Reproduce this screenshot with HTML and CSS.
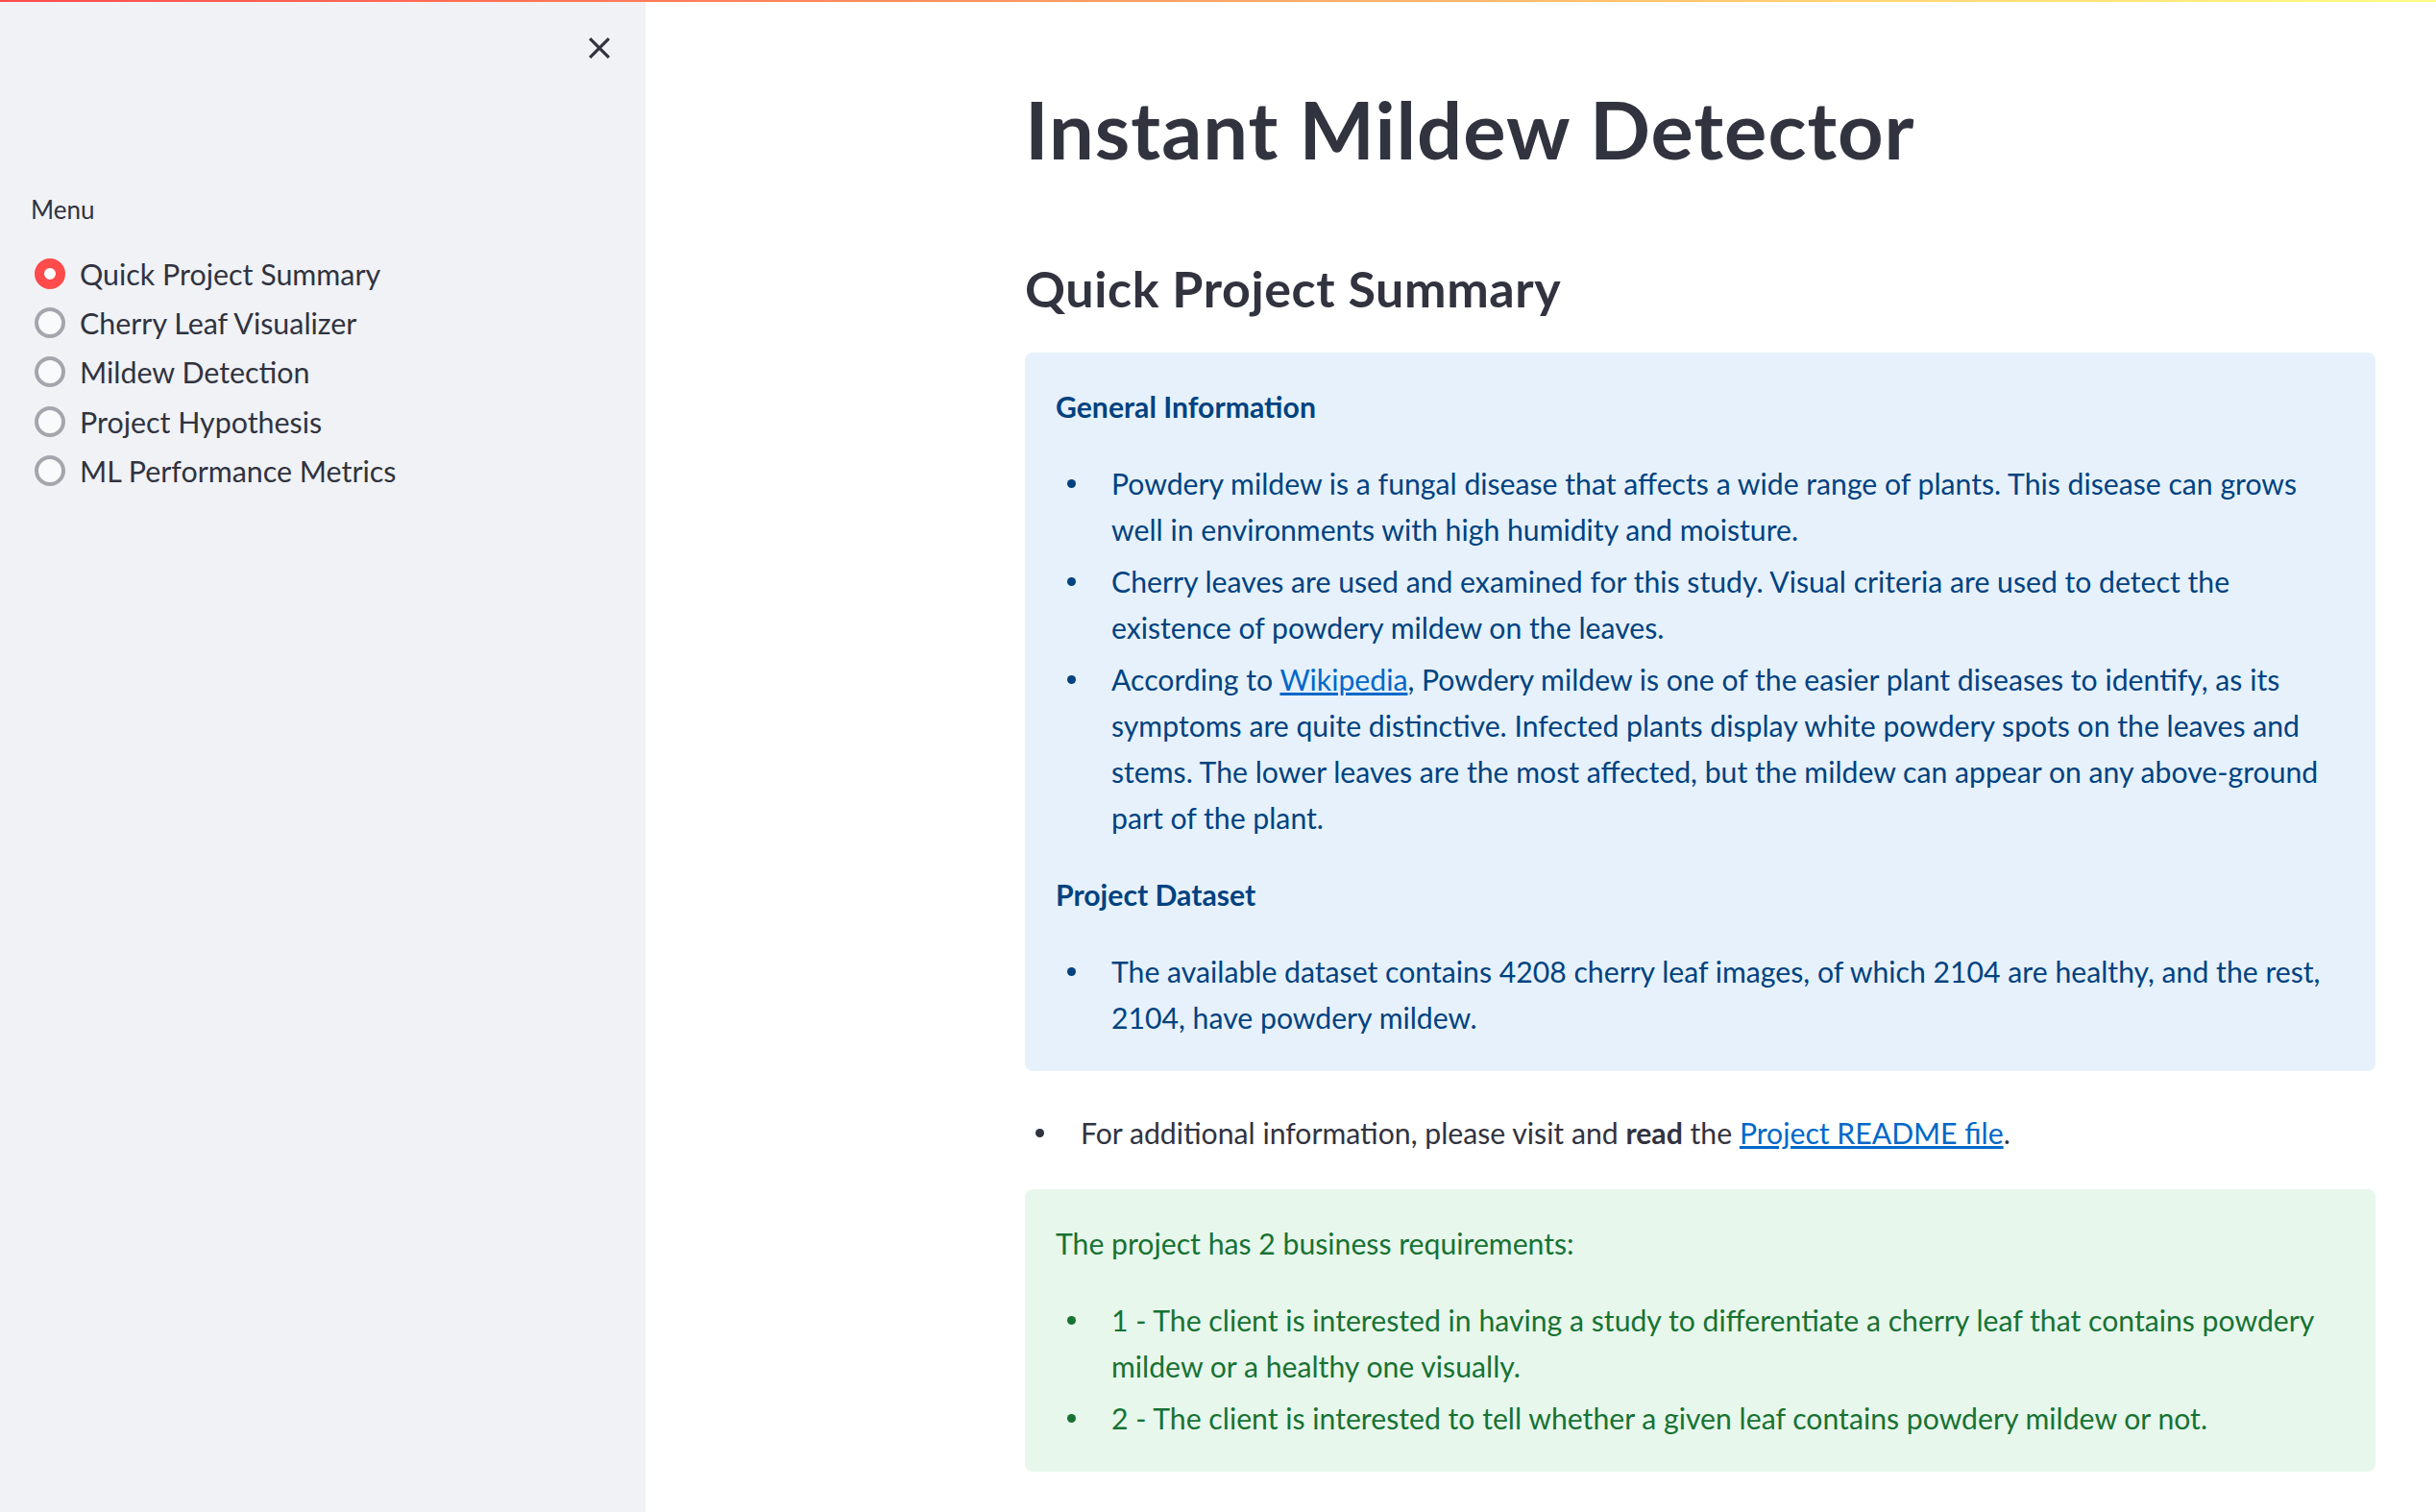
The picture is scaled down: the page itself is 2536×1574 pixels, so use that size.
FILE: index.html
```html
<!DOCTYPE html>
<html lang="en">
<head>
<meta charset="utf-8">
<title>Instant Mildew Detector</title>
<link rel="stylesheet" href="styles.css">
</head>
<body>
<div class="topbar"></div>
<div class="app">
  <aside class="sidebar">
    <div class="sb-head">
      <button class="close" aria-label="Close sidebar">
        <svg viewBox="5 5 14 14" width="22" height="22"><path d="M19 6.41L17.59 5 12 10.59 6.41 5 5 6.41 10.59 12 5 17.59 6.41 19 12 13.41 17.59 19 19 17.59 13.41 12z" fill="#31333f"/></svg>
      </button>
    </div>
    <div class="menu-label">Menu</div>
    <div class="radios">
      <label class="radio checked"><span class="ring"></span><span class="rlabel">Quick Project Summary</span></label>
      <label class="radio"><span class="ring"></span><span class="rlabel">Cherry Leaf Visualizer</span></label>
      <label class="radio"><span class="ring"></span><span class="rlabel">Mildew Detection</span></label>
      <label class="radio"><span class="ring"></span><span class="rlabel">Project Hypothesis</span></label>
      <label class="radio"><span class="ring"></span><span class="rlabel">ML Performance Metrics</span></label>
    </div>
  </aside>
  <main class="main">
    <div class="block">
      <h1 class="title">Instant Mildew Detector</h1>
      <h2 class="subtitle">Quick Project Summary</h2>
      <div class="alert info">
        <p class="strong">General Information</p>
        <ul class="list">
          <li><span class="txt">Powdery mildew is a fungal disease that affects a wide range of plants. This disease can grows well in environments with high humidity and moisture.</span></li>
          <li><span class="txt">Cherry leaves are used and examined for this study. Visual criteria are used to detect the existence of powdery mildew on the leaves.</span></li>
          <li><span class="txt">According to <a href="#">Wikipedia</a>, Powdery mildew is one of the easier plant diseases to identify, as its symptoms are quite distinctive. Infected plants display white powdery spots on the leaves and stems. The lower leaves are the most affected, but the mildew can appear on any above-ground part of the plant.</span></li>
        </ul>
        <p class="strong">Project Dataset</p>
        <ul class="list">
          <li><span class="txt">The available dataset contains 4208 cherry leaf images, of which 2104 are healthy, and the rest, 2104, have powdery mildew.</span></li>
        </ul>
      </div>
      <ul class="list outer">
        <li><span class="txt">For additional information, please visit and <b>read</b> the <a href="#">Project README file</a>.</span></li>
      </ul>
      <div class="alert success">
        <p>The project has 2 business requirements:</p>
        <ul class="list">
          <li><span class="txt">1 - The client is interested in having a study to differentiate a cherry leaf that contains powdery mildew or a healthy one visually.</span></li>
          <li><span class="txt">2 - The client is interested to tell whether a given leaf contains powdery mildew or not.</span></li>
        </ul>
      </div>
    </div>
  </main>
</div>
</body>
</html>
```

FILE: styles.css
```css
* { box-sizing: border-box; }

html, body {
  margin: 0;
  padding: 0;
  background: #ffffff;
}

body {
  font-family: "Lato", "Noto Sans", sans-serif;
  color: #31333f;
  font-size: 30.2px;
}

.topbar {
  position: fixed;
  top: 0;
  left: 0;
  right: 0;
  height: 2px;
  background: linear-gradient(90deg, #ff4b4b, #fffd80);
  z-index: 10;
}

.app {
  display: flex;
  min-height: 1574px;
}

/* ---------- Sidebar ---------- */
.sidebar {
  width: 672px;
  flex: 0 0 672px;
  background: #f0f2f6;
  padding: 39px 37px 0 32px;
}

.sb-head {
  display: flex;
  justify-content: flex-end;
}

.close {
  width: 22px;
  height: 22px;
  padding: 0;
  border: 0;
  background: transparent;
  display: block;
}

.close svg { display: block; }

.menu-label {
  margin-top: 139px;
  font-size: 26px;
  line-height: 36px;
  color: #31333f;
}

.radios {
  margin-top: 23px;
  display: flex;
  flex-direction: column;
}

.radio {
  display: flex;
  align-items: center;
  height: 51.3px;
  padding-left: 4px;
}

.ring {
  width: 32px;
  height: 32px;
  border-radius: 50%;
  border: 4px solid #a4a6ad;
  background: #f9fafb;
  flex: 0 0 32px;
}

.radio.checked .ring {
  border: 10px solid #ff4b4b;
  background: #ffffff;
}

.rlabel {
  margin-left: 15px;
  font-size: 30.4px;
  line-height: 40px;
  color: #31333f;
}

/* ---------- Main ---------- */
.main {
  flex: 1;
  padding: 86px 63px 0 395px;
}

.block {
  width: 1406px;
}

.title {
  margin: 0;
  font-size: 83px;
  line-height: 97px;
  letter-spacing: 1px;
  font-weight: 700;
  color: #31333f;
}

.subtitle {
  margin: 86.65px 0 0;
  font-size: 52px;
  line-height: 60px;
  letter-spacing: 0.6px;
  font-weight: 700;
  color: #31333f;
}

.alert {
  border-radius: 8px;
  padding: 32px;
  font-size: 30.2px;
  line-height: 48px;
}

.alert p {
  margin: 0 0 32px;
}

.alert > :last-child { margin-bottom: 0; }

.alert .strong { font-weight: 700; }

.info {
  margin-top: 37.35px;
  background: #e6f1fb;
  color: #004280;
}

.success {
  margin-top: 35px;
  background: #e7f7ec;
  color: #177233;
}

.list {
  list-style: none;
  margin: 0 0 32px;
  padding: 0;
}

.list li {
  display: grid;
  grid-template-columns: 58px 1fr;
  line-height: 48px;
}

.list li + li { margin-top: 6px; }

.list li::before {
  content: "";
  width: 9px;
  height: 9px;
  border-radius: 50%;
  background: currentColor;
  margin: 20px 0 0 12px;
}

.outer {
  margin: 40px 0 0;
  font-size: 30.2px;
  color: #31333f;
}

.outer li::before { margin-left: 11px; }

a {
  color: #0068c9;
  text-decoration: underline;
}

b { font-weight: 700; }
```
